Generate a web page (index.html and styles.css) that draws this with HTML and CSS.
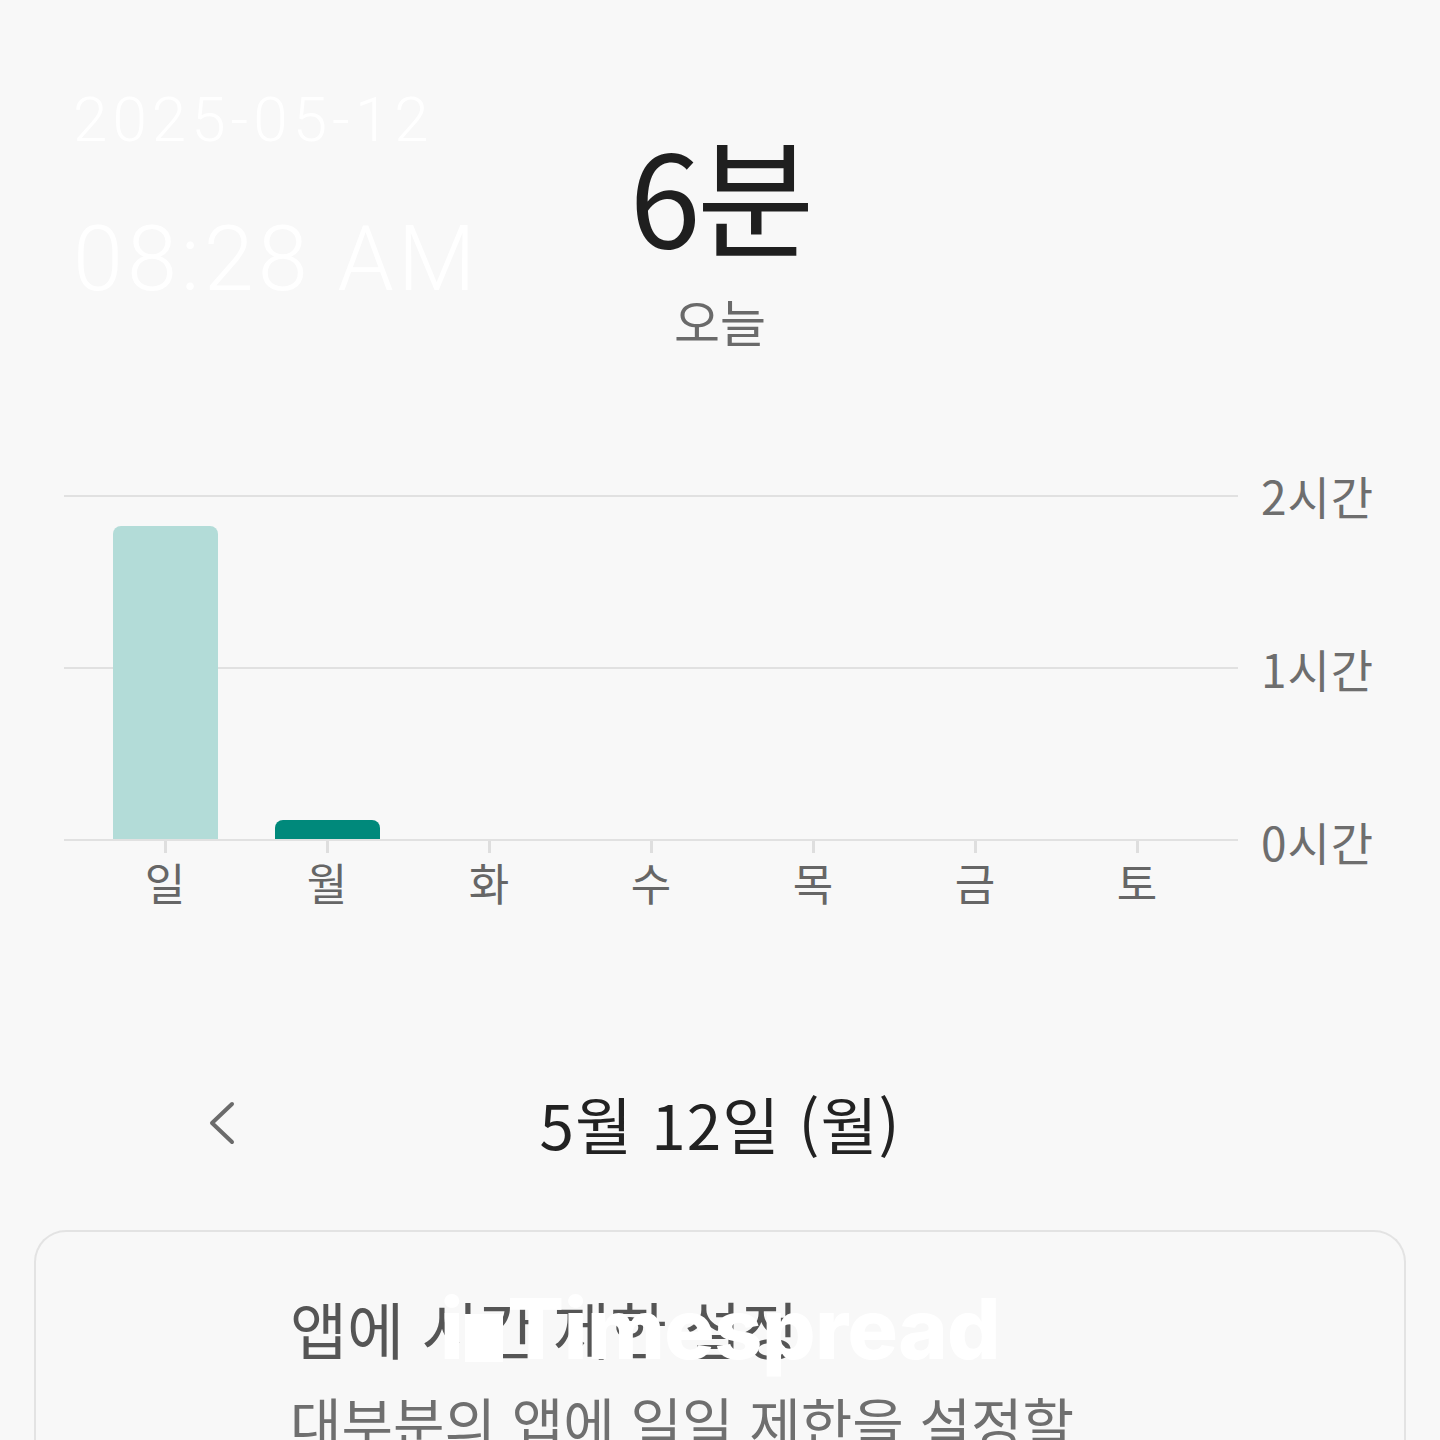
FILE: index.html
```html
<!DOCTYPE html>
<html lang="ko">
<head>
<meta charset="utf-8">
<link rel="stylesheet" href="styles.css">
</head>
<body>
<div class="screen">
  <div class="stamp">
    <div class="stamp-date">2025-05-12</div>
    <div class="stamp-time">08:28 AM</div>
  </div>

  <header class="summary">
    <div class="total">6분</div>
    <div class="period">오늘</div>
  </header>

  <section class="chart">
    <div class="plot">
      <div class="gridlines">
        <div class="gline"></div>
        <div class="gline"></div>
        <div class="gline"></div>
      </div>
      <div class="bars">
        <div class="col"><div class="bar bar-past" style="height:313px"></div></div>
        <div class="col"><div class="bar bar-today" style="height:19px"></div></div>
        <div class="col"></div>
        <div class="col"></div>
        <div class="col"></div>
        <div class="col"></div>
        <div class="col"></div>
      </div>
    </div>
    <div class="yaxis">
      <span>2시간</span>
      <span>1시간</span>
      <span>0시간</span>
    </div>
    <div class="xaxis">
      <div class="day"><i class="tick"></i><span>일</span></div>
      <div class="day"><i class="tick"></i><span>월</span></div>
      <div class="day"><i class="tick"></i><span>화</span></div>
      <div class="day"><i class="tick"></i><span>수</span></div>
      <div class="day"><i class="tick"></i><span>목</span></div>
      <div class="day"><i class="tick"></i><span>금</span></div>
      <div class="day"><i class="tick"></i><span>토</span></div>
    </div>
  </section>

  <nav class="datenav">
    <div class="prev">
      <svg width="30" height="44" viewBox="0 0 30 44"><path d="M26 3 L6 22 L26 41" fill="none" stroke="#6b6b6b" stroke-width="4" stroke-linecap="round" stroke-linejoin="round"/></svg>
    </div>
    <div class="date">5월 12일 (월)</div>
    <div></div>
  </nav>

  <section class="card">
    <div class="card-title">앱에 시간 제한 설정</div>
    <div class="card-sub">대부분의 앱에 일일 제한을 설정할</div>
  </section>

  <div class="watermark">i<b class="wm-block"></b>Timespread</div>
</div>
</body>
</html>
```
FILE: styles.css
```css
html, body {
  margin: 0;
  padding: 0;
  background: #f8f8f8;
}
body {
  width: 1440px;
  height: 1440px;
  overflow: hidden;
  font-family: "Noto Sans CJK KR", "Noto Sans", sans-serif;
}
.screen {
  position: relative;
  width: 1440px;
  height: 1440px;
  overflow: hidden;
}

/* overlayed timestamp */
.stamp {
  position: absolute;
  left: 73px;
  top: 82px;
  color: #ffffff;
  font-family: Roboto, "Liberation Sans", sans-serif;
  font-weight: 300;
}
.stamp-date {
  font-size: 62px;
  line-height: 76px;
  letter-spacing: 5px;
}
.stamp-time {
  margin-top: 52px;
  font-size: 90px;
  line-height: 100px;
  letter-spacing: 4px;
}

/* summary */
.summary {
  padding-top: 118px;
  text-align: center;
}
.total {
  font-size: 128px;
  line-height: 150px;
  color: #1f1f1f;
  font-weight: 400;
  letter-spacing: -4px;
}
.period {
  margin-top: 22px;
  font-size: 50px;
  line-height: 60px;
  color: #6a6a6a;
}

/* chart */
.chart {
  margin-top: 145px;
  margin-left: 64px;
  display: grid;
  grid-template-columns: 1173px auto;
  column-gap: 24px;
}
.plot {
  display: grid;
  height: 346px;
}
.gridlines, .bars {
  grid-area: 1 / 1;
}
.gridlines {
  display: flex;
  flex-direction: column;
  justify-content: space-between;
}
.gline {
  height: 2px;
  background: #e1e1e1;
}
.bars {
  display: grid;
  grid-template-columns: repeat(7, 162px);
  padding: 0 20px;
  padding-bottom: 2px;
  align-items: end;
}
.col {
  display: flex;
  justify-content: center;
  align-self: stretch;
  align-items: flex-end;
}
.bar {
  width: 105px;
  border-radius: 8px 8px 0 0;
}
.bar-past { background: #b3dcd8; }
.bar-today { background: #00897b; }

.yaxis {
  display: flex;
  flex-direction: column;
  justify-content: space-between;
  margin: -27px 0;
  font-size: 46px;
  line-height: 54px;
  color: #6e6e6e;
  letter-spacing: 1px;
}

.xaxis {
  grid-column: 1;
  display: grid;
  grid-template-columns: repeat(7, 162px);
  padding: 0 20px;
}
.day {
  display: flex;
  flex-direction: column;
  align-items: center;
}
.tick {
  display: block;
  width: 3px;
  height: 12px;
  background: #dedede;
}
.day span {
  font-size: 44px;
  line-height: 58px;
  color: #666666;
}

/* date navigation */
.datenav {
  margin-top: 170px;
  display: grid;
  grid-template-columns: 1fr auto 1fr;
  align-items: center;
}
.prev {
  padding-left: 206px;
  display: flex;
  align-items: center;
}
.date {
  font-size: 62px;
  line-height: 84px;
  color: #222222;
  letter-spacing: 1px;
}

/* card */
.card {
  margin: 65px 34px 0;
  border: 2px solid #e3e3e3;
  border-bottom: none;
  border-radius: 32px 32px 0 0;
  padding: 54px 0 0 254px;
  height: 300px;
}
.card-title {
  font-size: 62px;
  line-height: 84px;
  color: #555555;
  letter-spacing: 0;
}
.card-sub {
  margin-top: 16px;
  font-size: 56px;
  line-height: 70px;
  color: #6f6f6f;
  letter-spacing: 0;
}

.watermark {
  position: absolute;
  left: 440px;
  top: 1282px;
  font-family: Inter, Roboto, sans-serif;
  font-weight: 800;
  font-size: 84px;
  line-height: 94px;
  color: #ffffff;
  letter-spacing: -0.5px;
  display: flex;
  align-items: center;
}
.wm-block {
  display: inline-block;
  width: 38px;
  height: 48px;
  margin: 18px 4px 0 2px;
  background: #ffffff;
}
```
